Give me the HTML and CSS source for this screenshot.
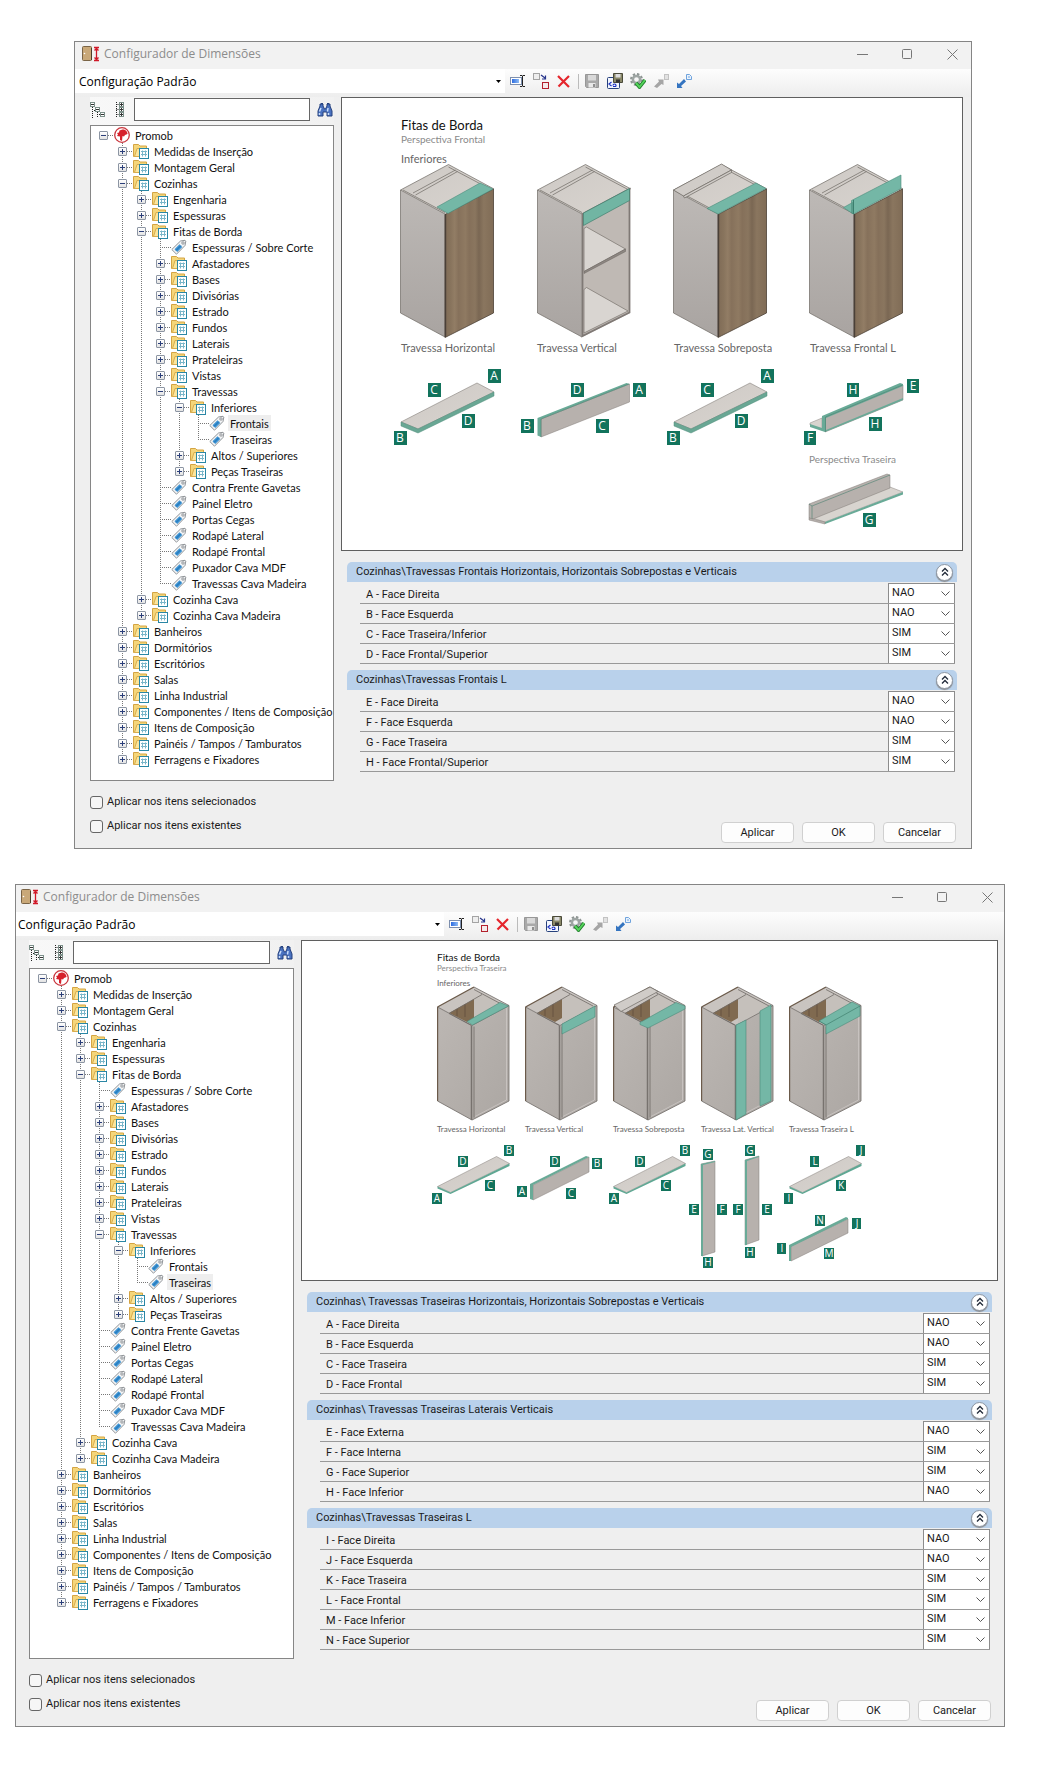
FILE: index.html
```html
<!DOCTYPE html>
<html lang="pt-BR">
<head>
<meta charset="utf-8">
<title>Configurador de Dimensões</title>
<link rel="stylesheet" href="styles.css">
</head>
<body>
<svg class="defs" aria-hidden="true">
  <defs>
    <linearGradient id="gSide" x1="0" y1="0" x2="0" y2="1"><stop offset="0" stop-color="#bdb9b6"/><stop offset="1" stop-color="#a9a4a1"/></linearGradient>
    <linearGradient id="gTop" x1="0" y1="0" x2="1" y2="1"><stop offset="0" stop-color="#cdc9c5"/><stop offset="1" stop-color="#d9d4cf"/></linearGradient>
    <linearGradient id="gRear" x1="0" y1="0" x2="1" y2="1"><stop offset="0" stop-color="#bcb7b3"/><stop offset="1" stop-color="#aca7a3"/></linearGradient>
    <linearGradient id="gWood" x1="0" x2="1"><stop offset="0" stop-color="#7f6b56"/><stop offset=".12" stop-color="#88745d"/><stop offset=".2" stop-color="#927d65"/><stop offset=".28" stop-color="#86715b"/><stop offset=".42" stop-color="#8f7a62"/><stop offset=".5" stop-color="#85705a"/><stop offset=".62" stop-color="#8a765f"/><stop offset=".7" stop-color="#7a6753"/><stop offset=".8" stop-color="#8a765f"/><stop offset="1" stop-color="#806c56"/></linearGradient>
    <linearGradient id="gBlue" x1="0" x2="1"><stop offset="0" stop-color="#2c6be0"/><stop offset="1" stop-color="#8ebcf5"/></linearGradient>
  </defs>

  <symbol id="folder" viewBox="0 0 16 16"><path d="M.5 13.500V1.500h5l1.500 1.500h6.500v9.500z" fill="#f5d67a" stroke="#d4a443"/><path d="M1.500 13.500 4 5.500h10v8z" fill="#fbe59c" stroke="#d9ad4e"/><rect x="6.500" y="5.500" width="9" height="10" fill="#fff" stroke="#2a87a5"/><path d="M8 8.500h6M8 11.500h6M9.500 7.500v6M12.500 7.500v6" stroke="#7ab6c9" fill="none"/></symbol>
  <symbol id="tag" viewBox="0 0 16 16"><path d="M.8 10.500 9.500 2l4.500-.7.800.8-.8 4.400-8.500 8.700z" fill="#f3f4f5" stroke="#8f9397"/><path d="m3.500 10.300 5-5 2.800 2.800-5 5z" fill="#3b93d4"/><path d="m5 11.500 4.800-4.800" stroke="#1f6cab"/><circle cx="12" cy="4" r="1.200" fill="#fff" stroke="#8f9397"/></symbol>
  <symbol id="promob" viewBox="0 0 16 16"><circle cx="8" cy="8" r="7.300" fill="#fff" stroke="#c9343c" stroke-width="1.300"/><path d="M8.500 2.500c3 0 5 2 5 4.500l-2.500 1-1 1.500-1.500-.5-.5 5-2-1V9.500L3 9l1-1.500L3 6l2-.5.500-2z" fill="#d6202b"/></symbol>
  <symbol id="app" viewBox="0 0 18 16"><rect x=".5" y=".5" width="9" height="14" rx="1" fill="#c9a878" stroke="#7a6446"/><path d="M9.500 2v12" stroke="#4e3f2c"/><circle cx="2.500" cy="7.500" r=".8" fill="#fff"/><path d="M12 1.500h5M12 14.500h5M14.500 2v12M12.500 4.500l2-2 2 2M12.500 11.500l2 2 2-2" fill="none" stroke="#d01828" stroke-width="1.300"/></symbol>
  <symbol id="min" viewBox="0 0 11 11"><path d="M0 5.500h11" stroke="#777"/></symbol>
  <symbol id="max" viewBox="0 0 11 11"><rect x=".5" y=".5" width="9" height="9" rx="1" fill="none" stroke="#777"/></symbol>
  <symbol id="close" viewBox="0 0 11 11"><path d="m.5.5 10 10m0-10-10 10" stroke="#777" fill="none"/></symbol>
  <symbol id="rename" viewBox="0 0 16 16"><rect x=".5" y="4.500" width="11" height="7" fill="#fff" stroke="#7d8fae"/><path d="M2 6h7v4H2z" fill="url(#gBlue)"/><path d="M10 2.500h2l.5.500.5-.5h2M10 13.500h2l.5-.5.500.5h2M12.500 3v10" stroke="#222" fill="none"/></symbol>
  <symbol id="dup" viewBox="0 0 16 16"><rect x=".5" y=".5" width="6" height="6" fill="#eee" stroke="#555" stroke-dasharray="1 1"/><path d="m8 2 4 3M12.500 2.500V6H9" stroke="#26348c" fill="none" stroke-width="1.200"/><rect x="9.500" y="9.500" width="6" height="6" fill="#f4eaea" stroke="#b3202c"/></symbol>
  <symbol id="del" viewBox="0 0 16 16"><path d="m2 3 11 11M13 3 2.500 13.500" stroke="#e5252c" stroke-width="2.200" fill="none"/></symbol>
  <symbol id="save" viewBox="0 0 16 16"><path d="M1.500 1.500h13v13h-12l-1-1z" fill="#a9a9a9" stroke="#979797"/><path d="M4 2h8v5.500H4z" fill="#d9d9d9"/><path d="M4.500 10h7v4.500h-7z" fill="#e9e9e9"/><path d="M9 11h2v3H9z" fill="#8f8f8f"/></symbol>
  <symbol id="saveas" viewBox="0 0 16 16"><rect x=".5" y="4.500" width="12" height="11" rx="1" fill="#f3f6fd" stroke="#26417c"/><path d="M6.500.5h9v9h-9z" fill="#8a8868" stroke="#4a4a3a"/><path d="M8.500 1h5v3.500h-5z" fill="#ddd"/><path d="M9 6.500h4v3H9z" fill="#333"/><path d="m4.500 9-2.500 2 2.500 2M6 12.500c0-2 3-2 3 0v1M6 13.500h3" stroke="#1a2fc0" stroke-width="1.200" fill="none"/></symbol>
  <symbol id="gear" viewBox="0 0 16 16"><circle cx="6.500" cy="6.500" r="5" fill="none" stroke="#8f9694" stroke-width="3" stroke-dasharray="2.200 1.700"/><circle cx="6.500" cy="6.500" r="3.600" fill="none" stroke="#9ea5a3" stroke-width="2.500"/><path d="m6 10 3.500 4 5.500-7" fill="none" stroke="#1e7a2a" stroke-width="3.600"/><path d="m6 10 3.500 4 5.500-7" fill="none" stroke="#54d35a" stroke-width="2"/></symbol>
  <symbol id="impG" viewBox="0 0 16 16"><path d="m1 13.500 5-5-1-2h5.500V12l-2-1-4.500 4z" fill="#a5a5a5"/><rect x="11.500" y="1.500" width="4" height="5" fill="#e2e2e2" stroke="#c2c2c2"/></symbol>
  <symbol id="expB" viewBox="0 0 16 16"><path d="M1 9.500V15h5.500l-1.500-2L10 8.500 8 6 3 11z" fill="#3474c0"/><path d="M10.500 1.500h3l2 2v3h-5z" fill="#eaf3fd" stroke="#6fa3dd"/><path d="M12 4h2" stroke="#6fa3dd"/></symbol>
  <symbol id="collapse" viewBox="0 0 16 16"><path d="M2.500 5v11M7.500 10v6M4 8.500h2M9 12.500h2" stroke="#222" stroke-dasharray="1 1" fill="none"/><g fill="#fff" stroke="#7c908a"><rect x=".5" y=".5" width="4" height="4"/><rect x="5.500" y="5.500" width="4" height="4"/><rect x="10.500" y="10.500" width="4" height="4"/></g><path d="M1 2.500h3M6 7.500h3M11 12.500h3" stroke="#333"/></symbol>
  <symbol id="expand" viewBox="0 0 16 16"><path d="M4.500 0v16M4.500 2.500h4M4.500 7.500h4M4.500 12.500h4" stroke="#222" stroke-dasharray="1 1" fill="none"/><g fill="#fff" stroke="#7c908a"><rect x="7.500" y=".5" width="4" height="4"/><rect x="7.500" y="5.500" width="4" height="4"/><rect x="7.500" y="10.500" width="4" height="4"/></g><path d="M8 2.500h3M8 7.500h3M8 12.500h3M9.500 1v3M9.500 6v3M9.500 11v3" stroke="#333"/></symbol>
  <symbol id="find" viewBox="0 0 16 16"><path d="M1 14V9l2-5V2h3v2l1.500 3h1L10 4V2h3v2l2 5v5h-5v-4H6v4z" fill="#4a72c0" stroke="#25407c"/><path d="M2.500 9.500 4 6M11 6l-.5 3.500M2.500 11v2M11.500 11v2" stroke="#c9defb" stroke-width="1.500"/><path d="M4 1.500h2M10 1.500h2" stroke="#25407c"/></symbol>
  <symbol id="up2" viewBox="0 0 10 10"><path d="m2 4.500 3-3 3 3m-6 4 3-3 3 3" fill="none" stroke="#222b3a" stroke-width="1.300"/></symbol>

  <symbol id="caseFront" viewBox="0 0 96 176">
    <path d="M48.500 1.500 94 26 45 51 .5 27z" fill="url(#gTop)"/>
    <path d="M.5 27 45 51v123L.5 150z" fill="url(#gSide)"/>
    <path d="M.5 27 48.500 1.500 94 26M3 27 45 49.500M48.500 4 91 26.500M57.500 8.500 15.500 32M55.500 7 13 30M.5 27 45 51M.5 27v123l44.500 24" fill="none" stroke="#6d6863" stroke-width=".7"/>
  </symbol>
  <symbol id="door" viewBox="0 0 96 176"><path d="M45 51.500 93.500 26v124L45 174.500z" fill="url(#gWood)" stroke="#4b4035" stroke-width=".8"/><path d="M45.500 51v123" stroke="#4a4038" stroke-width="1.400"/></symbol>
  <symbol id="openFront" viewBox="0 0 96 176">
    <path d="M45 51 93 26v124L45 174z" fill="#bfb9b4"/>
    <path d="M47 65.500 49.500 64 88.500 86 47 108.500zM47 126.500l2.500-2L91 148l-44 22z" fill="#d9d5d1" stroke="#77716c" stroke-width=".7"/>
    <path d="m47 108.500 41.500-22.500v2.500L47 110.500z" fill="#8e8883" stroke="#68635f" stroke-width=".5"/>
    <path d="M45.500 51v122l47-23.500V26z" fill="none" stroke="#7f7975" stroke-width="1.800"/>
    <path d="m46.500 50 46-24.500v12L46.500 62.500z" fill="#71b5a3" stroke="#41806f" stroke-width=".7"/>
  </symbol>
  <symbol id="caseRear" viewBox="0 0 74 136">
    <path d="M37 1 72 19.500 35 39.500.5 21z" fill="#c9c4c0"/>
    <path d="M12 27 37 13v19l-7 4z" fill="#806a50"/><path d="M20 23v7M28 18v13" stroke="#665340"/>
    <path d="m37 13 8-5 25 12.500L37 37z" fill="#c5c0bb"/>
    <path d="M.5 21 35 39.500V134L.5 115zM35 39.500l37-20V115l-37 19z" fill="url(#gRear)"/>
    <path d="M.5 21v94M.5 21 37 1" stroke="#6b5a4a" stroke-width="1.400" fill="none"/>
    <path d="M37 1 72 19.500 35 39.500.5 21M37 3.500l31 16.500M45 8.500 12 27.500l22.500 12M72 19.500V115l-37 19L.5 115M37 40.500v91" fill="none" stroke="#6f6a66" stroke-width=".8"/>
    <path d="M34.500 40v94" stroke="#77726e" stroke-width="1.500"/><path d="M38 130.500 69.500 114V22" fill="none" stroke="#cdc8c5" stroke-width=".8"/>
  </symbol>
  <symbol id="boardL" viewBox="0 0 96 54"><path d="M1 40 77 1l17 9-76 37z" fill="url(#gTop)" stroke="#857f7a" stroke-width=".6"/><path d="m1 40 17 7 76-37v4L18 51 1 44z" fill="#69a794" stroke="#4f8c7b" stroke-width=".5"/></symbol>
  <symbol id="boardS" viewBox="0 0 74 38"><path d="M.5 30.500 59.500.5l13 7-59 29z" fill="url(#gTop)" stroke="#857f7a" stroke-width=".5"/><path d="m.5 30.500 13 6 59-29V10l-59 28-13-5.500z" fill="#5fa793"/></symbol>
</svg>

<main class="page">
<section class="window window-front">
  <header class="titlebar">
    <svg class="app-icon"><use href="#app"/></svg><h1>Configurador de Dimensões</h1>
    <div class="win-controls"><button type="button" aria-label="Minimizar"><svg><use href="#min"/></svg></button><button type="button" aria-label="Maximizar"><svg><use href="#max"/></svg></button><button type="button" aria-label="Fechar"><svg><use href="#close"/></svg></button></div>
  </header>
  <div class="toolbar">
    <select class="preset" aria-label="Configuração"><option>Configuração Padrão</option></select>
    <button type="button" aria-label="Renomear"><svg><use href="#rename"/></svg></button><button type="button" aria-label="Duplicar"><svg><use href="#dup"/></svg></button><button type="button" aria-label="Excluir"><svg><use href="#del"/></svg></button><span class="sep"></span><button type="button" aria-label="Salvar"><svg><use href="#save"/></svg></button><button type="button" aria-label="Salvar como"><svg><use href="#saveas"/></svg></button><button type="button" aria-label="Validar"><svg><use href="#gear"/></svg></button><button type="button" aria-label="Importar"><svg><use href="#impG"/></svg></button><button type="button" aria-label="Exportar"><svg><use href="#expB"/></svg></button>
  </div>
  <div class="content">
    <aside class="sidebar">
      <div class="side-tools"><button type="button" aria-label="Recolher tudo"><svg><use href="#collapse"/></svg></button><button type="button" aria-label="Expandir tudo"><svg><use href="#expand"/></svg></button><input type="text" aria-label="Pesquisar"><button type="button" aria-label="Localizar"><svg><use href="#find"/></svg></button></div>
      <ul class="tree">
        <li><details open><summary><svg><use href="#promob"/></svg><span>Promob</span></summary><ul>
          <li><details><summary><svg><use href="#folder"/></svg><span>Medidas de Inserção</span></summary></details></li>
          <li><details><summary><svg><use href="#folder"/></svg><span>Montagem Geral</span></summary></details></li>
          <li><details open><summary><svg><use href="#folder"/></svg><span>Cozinhas</span></summary><ul>
            <li><details><summary><svg><use href="#folder"/></svg><span>Engenharia</span></summary></details></li>
            <li><details><summary><svg><use href="#folder"/></svg><span>Espessuras</span></summary></details></li>
            <li><details open><summary><svg><use href="#folder"/></svg><span>Fitas de Borda</span></summary><ul>
              <li class="leaf"><svg><use href="#tag"/></svg><span>Espessuras / Sobre Corte</span></li>
              <li><details><summary><svg><use href="#folder"/></svg><span>Afastadores</span></summary></details></li>
              <li><details><summary><svg><use href="#folder"/></svg><span>Bases</span></summary></details></li>
              <li><details><summary><svg><use href="#folder"/></svg><span>Divisórias</span></summary></details></li>
              <li><details><summary><svg><use href="#folder"/></svg><span>Estrado</span></summary></details></li>
              <li><details><summary><svg><use href="#folder"/></svg><span>Fundos</span></summary></details></li>
              <li><details><summary><svg><use href="#folder"/></svg><span>Laterais</span></summary></details></li>
              <li><details><summary><svg><use href="#folder"/></svg><span>Prateleiras</span></summary></details></li>
              <li><details><summary><svg><use href="#folder"/></svg><span>Vistas</span></summary></details></li>
              <li><details open><summary><svg><use href="#folder"/></svg><span>Travessas</span></summary><ul>
                <li><details open><summary><svg><use href="#folder"/></svg><span>Inferiores</span></summary><ul>
                  <li class="leaf"><svg><use href="#tag"/></svg><span class="current">Frontais</span></li>
                  <li class="leaf"><svg><use href="#tag"/></svg><span>Traseiras</span></li>
                </ul></details></li>
                <li><details><summary><svg><use href="#folder"/></svg><span>Altos / Superiores</span></summary></details></li>
                <li><details><summary><svg><use href="#folder"/></svg><span>Peças Traseiras</span></summary></details></li>
              </ul></details></li>
              <li class="leaf"><svg><use href="#tag"/></svg><span>Contra Frente Gavetas</span></li>
              <li class="leaf"><svg><use href="#tag"/></svg><span>Painel Eletro</span></li>
              <li class="leaf"><svg><use href="#tag"/></svg><span>Portas Cegas</span></li>
              <li class="leaf"><svg><use href="#tag"/></svg><span>Rodapé Lateral</span></li>
              <li class="leaf"><svg><use href="#tag"/></svg><span>Rodapé Frontal</span></li>
              <li class="leaf"><svg><use href="#tag"/></svg><span>Puxador Cava MDF</span></li>
              <li class="leaf"><svg><use href="#tag"/></svg><span>Travessas Cava Madeira</span></li>
            </ul></details></li>
            <li><details><summary><svg><use href="#folder"/></svg><span>Cozinha Cava</span></summary></details></li>
            <li><details><summary><svg><use href="#folder"/></svg><span>Cozinha Cava Madeira</span></summary></details></li>
          </ul></details></li>
          <li><details><summary><svg><use href="#folder"/></svg><span>Banheiros</span></summary></details></li>
          <li><details><summary><svg><use href="#folder"/></svg><span>Dormitórios</span></summary></details></li>
          <li><details><summary><svg><use href="#folder"/></svg><span>Escritórios</span></summary></details></li>
          <li><details><summary><svg><use href="#folder"/></svg><span>Salas</span></summary></details></li>
          <li><details><summary><svg><use href="#folder"/></svg><span>Linha Industrial</span></summary></details></li>
          <li><details><summary><svg><use href="#folder"/></svg><span>Componentes / Itens de Composição</span></summary></details></li>
          <li><details><summary><svg><use href="#folder"/></svg><span>Itens de Composição</span></summary></details></li>
          <li><details><summary><svg><use href="#folder"/></svg><span>Painéis / Tampos / Tamburatos</span></summary></details></li>
          <li><details><summary><svg><use href="#folder"/></svg><span>Ferragens e Fixadores</span></summary></details></li>
        </ul></details></li>
      </ul>
    </aside>
    <div class="detail">
      <svg class="picture picture-l" viewBox="342 98 620 452">
        <text class="t-title" x="401" y="130">Fitas de Borda</text>
        <text class="t-sub" x="401" y="143">Perspectiva Frontal</text>
        <text class="t-label" x="401" y="163">Inferiores</text>
        <use href="#caseFront" x="400" y="163" width="96" height="176"/><use href="#door" x="400" y="163" width="96" height="176"/>
        <path class="teal" d="m480 183 13 6-45 24.500-11-6.500z"/>
        <use href="#caseFront" x="537" y="163" width="96" height="176"/><use href="#openFront" x="537" y="163" width="96" height="176"/>
        <use href="#caseFront" x="673" y="163" width="96" height="176"/><use href="#door" x="673" y="163" width="96" height="176"/>
        <path class="cap" d="m673.500 190 48-26 10 6-48 26z"/><path class="cap" d="m683.500 196 48-26v2.500l-47 25.500z"/>
        <path class="teal" d="m707 208.500 49-25.500 10 5.500-48 25.500z"/>
        <use href="#caseFront" x="809" y="163" width="96" height="176"/><use href="#door" x="809" y="163" width="96" height="176"/>
        <path class="teal" d="m843.500 207.500 9-5v11zM851.500 200.500 901 175v13.500l-47.500 25.500-2-1z"/>
        <path d="M853.500 200v14" stroke="#3b7e6d"/>
        <text class="t-label" x="401" y="352">Travessa Horizontal</text><text class="t-label" x="537" y="352">Travessa Vertical</text><text class="t-label" x="674" y="352">Travessa Sobreposta</text><text class="t-label" x="810" y="352">Travessa Frontal L</text>
        <use href="#boardL" x="400" y="382" width="96" height="54"/><use href="#boardL" x="673" y="382" width="96" height="54"/>
        <path class="face" d="m541 419 88.500-35v18L541 437z"/><path class="edge" d="m537.500 418 89-35 3 1-88.500 35v18l-3.500-1.500z"/><path class="crease" d="M541 437v-18l88-35"/>
        <path class="light" d="m810 423 12-5v12l-12-5z"/><path class="edge" d="m810 424 12 4v3l-12-4z"/><path class="face" d="m825 417 78-32v15l-78 32z"/><path class="edge" d="m822 416 78-33 3 1v2l-77 32v12l77-32v2l-78 32-3-1z"/><path class="crease" d="M825.500 432v-15l77-32"/>
        <text class="t-sub" x="809" y="463">Perspectiva Traseira</text>
        <path class="light" d="m812 518 78-31 13 5-78 30z"/><path class="face" d="m809 504 78-30 3 1v13l-77 31-4-1z"/><path class="crease" d="M812 519v-13l78-31M809 504l3 2"/><path class="edge" d="m825 522 78-30v2.500L825 524z"/><path class="face" d="m809 518 16 4v2l-16-4z"/>
        <g class="badges"><path d="M488 369h13v14h-13zM428 383h13v14h-13zM394 431h13v14h-13zM462 414h13v14h-13zM571 383h13v14h-13zM633 383h13v14h-13zM521 419h13v14h-13zM596 419h13v14h-13zM761 369h13v14h-13zM701 383h13v14h-13zM667 431h13v14h-13zM735 414h13v14h-13zM847 383h12v14h-12zM907 379h12v14h-12zM804 431h12v14h-12zM869 417h13v14h-13zM863 513h13v14h-13z"/>
        <text x="494" y="380">A</text><text x="434" y="394">C</text><text x="400" y="442">B</text><text x="468" y="425">D</text><text x="577" y="394">D</text><text x="639" y="394">A</text><text x="527" y="430">B</text><text x="602" y="430">C</text><text x="767" y="380">A</text><text x="707" y="394">C</text><text x="673" y="442">B</text><text x="741" y="425">D</text><text x="853" y="394">H</text><text x="913" y="390">E</text><text x="810" y="442">F</text><text x="875" y="428">H</text><text x="869" y="524">G</text></g>
      </svg>
      <section class="group"><h2>Cozinhas\Travessas Frontais Horizontais, Horizontais Sobrepostas e Verticais<button type="button" aria-label="Recolher grupo"><svg><use href="#up2"/></svg></button></h2>
        <label>A - Face Direita<select><option>NAO</option><option>SIM</option></select></label>
        <label>B - Face Esquerda<select><option>NAO</option><option>SIM</option></select></label>
        <label>C - Face Traseira/Inferior<select><option>SIM</option><option>NAO</option></select></label>
        <label>D - Face Frontal/Superior<select><option>SIM</option><option>NAO</option></select></label>
      </section>
      <section class="group"><h2>Cozinhas\Travessas Frontais L<button type="button" aria-label="Recolher grupo"><svg><use href="#up2"/></svg></button></h2>
        <label>E - Face Direita<select><option>NAO</option><option>SIM</option></select></label>
        <label>F - Face Esquerda<select><option>NAO</option><option>SIM</option></select></label>
        <label>G - Face Traseira<select><option>SIM</option><option>NAO</option></select></label>
        <label>H - Face Frontal/Superior<select><option>SIM</option><option>NAO</option></select></label>
      </section>
    </div>
  </div>
  <footer class="footer">
    <div class="checks"><label><input type="checkbox">Aplicar nos itens selecionados</label><label><input type="checkbox">Aplicar nos itens existentes</label></div>
    <div class="actions"><button type="button">Aplicar</button><button type="button">OK</button><button type="button">Cancelar</button></div>
  </footer>
</section>

<section class="window window-rear">
  <header class="titlebar">
    <svg class="app-icon"><use href="#app"/></svg><h1>Configurador de Dimensões</h1>
    <div class="win-controls"><button type="button" aria-label="Minimizar"><svg><use href="#min"/></svg></button><button type="button" aria-label="Maximizar"><svg><use href="#max"/></svg></button><button type="button" aria-label="Fechar"><svg><use href="#close"/></svg></button></div>
  </header>
  <div class="toolbar">
    <select class="preset" aria-label="Configuração"><option>Configuração Padrão</option></select>
    <button type="button" aria-label="Renomear"><svg><use href="#rename"/></svg></button><button type="button" aria-label="Duplicar"><svg><use href="#dup"/></svg></button><button type="button" aria-label="Excluir"><svg><use href="#del"/></svg></button><span class="sep"></span><button type="button" aria-label="Salvar"><svg><use href="#save"/></svg></button><button type="button" aria-label="Salvar como"><svg><use href="#saveas"/></svg></button><button type="button" aria-label="Validar"><svg><use href="#gear"/></svg></button><button type="button" aria-label="Importar"><svg><use href="#impG"/></svg></button><button type="button" aria-label="Exportar"><svg><use href="#expB"/></svg></button>
  </div>
  <div class="content">
    <aside class="sidebar">
      <div class="side-tools"><button type="button" aria-label="Recolher tudo"><svg><use href="#collapse"/></svg></button><button type="button" aria-label="Expandir tudo"><svg><use href="#expand"/></svg></button><input type="text" aria-label="Pesquisar"><button type="button" aria-label="Localizar"><svg><use href="#find"/></svg></button></div>
      <ul class="tree">
        <li><details open><summary><svg><use href="#promob"/></svg><span>Promob</span></summary><ul>
          <li><details><summary><svg><use href="#folder"/></svg><span>Medidas de Inserção</span></summary></details></li>
          <li><details><summary><svg><use href="#folder"/></svg><span>Montagem Geral</span></summary></details></li>
          <li><details open><summary><svg><use href="#folder"/></svg><span>Cozinhas</span></summary><ul>
            <li><details><summary><svg><use href="#folder"/></svg><span>Engenharia</span></summary></details></li>
            <li><details><summary><svg><use href="#folder"/></svg><span>Espessuras</span></summary></details></li>
            <li><details open><summary><svg><use href="#folder"/></svg><span>Fitas de Borda</span></summary><ul>
              <li class="leaf"><svg><use href="#tag"/></svg><span>Espessuras / Sobre Corte</span></li>
              <li><details><summary><svg><use href="#folder"/></svg><span>Afastadores</span></summary></details></li>
              <li><details><summary><svg><use href="#folder"/></svg><span>Bases</span></summary></details></li>
              <li><details><summary><svg><use href="#folder"/></svg><span>Divisórias</span></summary></details></li>
              <li><details><summary><svg><use href="#folder"/></svg><span>Estrado</span></summary></details></li>
              <li><details><summary><svg><use href="#folder"/></svg><span>Fundos</span></summary></details></li>
              <li><details><summary><svg><use href="#folder"/></svg><span>Laterais</span></summary></details></li>
              <li><details><summary><svg><use href="#folder"/></svg><span>Prateleiras</span></summary></details></li>
              <li><details><summary><svg><use href="#folder"/></svg><span>Vistas</span></summary></details></li>
              <li><details open><summary><svg><use href="#folder"/></svg><span>Travessas</span></summary><ul>
                <li><details open><summary><svg><use href="#folder"/></svg><span>Inferiores</span></summary><ul>
                  <li class="leaf"><svg><use href="#tag"/></svg><span>Frontais</span></li>
                  <li class="leaf"><svg><use href="#tag"/></svg><span class="current">Traseiras</span></li>
                </ul></details></li>
                <li><details><summary><svg><use href="#folder"/></svg><span>Altos / Superiores</span></summary></details></li>
                <li><details><summary><svg><use href="#folder"/></svg><span>Peças Traseiras</span></summary></details></li>
              </ul></details></li>
              <li class="leaf"><svg><use href="#tag"/></svg><span>Contra Frente Gavetas</span></li>
              <li class="leaf"><svg><use href="#tag"/></svg><span>Painel Eletro</span></li>
              <li class="leaf"><svg><use href="#tag"/></svg><span>Portas Cegas</span></li>
              <li class="leaf"><svg><use href="#tag"/></svg><span>Rodapé Lateral</span></li>
              <li class="leaf"><svg><use href="#tag"/></svg><span>Rodapé Frontal</span></li>
              <li class="leaf"><svg><use href="#tag"/></svg><span>Puxador Cava MDF</span></li>
              <li class="leaf"><svg><use href="#tag"/></svg><span>Travessas Cava Madeira</span></li>
            </ul></details></li>
            <li><details><summary><svg><use href="#folder"/></svg><span>Cozinha Cava</span></summary></details></li>
            <li><details><summary><svg><use href="#folder"/></svg><span>Cozinha Cava Madeira</span></summary></details></li>
          </ul></details></li>
          <li><details><summary><svg><use href="#folder"/></svg><span>Banheiros</span></summary></details></li>
          <li><details><summary><svg><use href="#folder"/></svg><span>Dormitórios</span></summary></details></li>
          <li><details><summary><svg><use href="#folder"/></svg><span>Escritórios</span></summary></details></li>
          <li><details><summary><svg><use href="#folder"/></svg><span>Salas</span></summary></details></li>
          <li><details><summary><svg><use href="#folder"/></svg><span>Linha Industrial</span></summary></details></li>
          <li><details><summary><svg><use href="#folder"/></svg><span>Componentes / Itens de Composição</span></summary></details></li>
          <li><details><summary><svg><use href="#folder"/></svg><span>Itens de Composição</span></summary></details></li>
          <li><details><summary><svg><use href="#folder"/></svg><span>Painéis / Tampos / Tamburatos</span></summary></details></li>
          <li><details><summary><svg><use href="#folder"/></svg><span>Ferragens e Fixadores</span></summary></details></li>
        </ul></details></li>
      </ul>
    </aside>
    <div class="detail">
      <svg class="picture picture-s" viewBox="302 940 695 339">
        <text class="t-title" x="437" y="960">Fitas de Borda</text>
        <text class="t-sub" x="437" y="970">Perspectiva Traseira</text>
        <text class="t-label" x="437" y="985">Inferiores</text>
        <use href="#caseRear" x="437" y="985" width="74" height="136"/><path class="teal" d="m500 1001.500 8.500 3.500-36 19-5.500-3.500z"/>
        <use href="#caseRear" x="525" y="985" width="74" height="136"/><path class="teal" d="m562 1023 33-18v11l-33 17z"/>
        <use href="#caseRear" x="613" y="985" width="74" height="136"/><path class="cap" d="m614 1004 36-18 8 4.500-37 20z"/><path class="teal" d="m640 1021.500 36-20 9 3.500v3l-37 19-8-3.500z"/>
        <use href="#caseRear" x="701" y="985" width="74" height="136"/><path class="teal" d="m736 1024 10-5v94l-10 6zM760 1010l11-6v96l-11 5z"/>
        <use href="#caseRear" x="789" y="985" width="74" height="136"/><path class="teal" d="m819 1020 33-19 8 4v10l-34 18v-9z"/><path d="m819 1020 7 4 34-19" fill="none" stroke="#41806f" stroke-width=".7"/>
        <text class="t-label" x="437" y="1131">Travessa Horizontal</text><text class="t-label" x="525" y="1131">Travessa Vertical</text><text class="t-label" x="613" y="1131">Travessa Sobreposta</text><text class="t-label" x="701" y="1131">Travessa Lat. Vertical</text><text class="t-label" x="789" y="1131">Travessa Traseira L</text>
        <use href="#boardS" x="437" y="1155" width="74" height="38"/><use href="#boardS" x="613" y="1155" width="74" height="38"/><use href="#boardS" x="789" y="1155" width="74" height="38"/>
        <path class="face" d="m533 1184 56-28v15l-56 28z"/><path class="edge" d="m530 1183 56-28 3 1-56 28v15l-3-1z"/>
        <path class="face" d="m701 1163 14-3v91l-13 4z"/><path class="edge" d="m701 1163 14-3v1l-12 3v91h-2z"/>
        <path class="face" d="m745 1159 14-4v84l-14 5z"/><path class="edge" d="m745 1159 14-4v1l-12 4v84h-2z"/>
        <path class="face" d="m791 1245 57-27v14l-57 28z"/><path class="edge" d="m789 1244 57-28 2 1v1l-57 28v14h-2z"/>
        <g class="badges"><path d="M504 1144h10v11h-10zM458 1155h10v11h-10zM485 1179h10v11h-10zM432 1192h10v11h-10zM550 1155h10v11h-10zM592 1157h10v11h-10zM517 1185h10v11h-10zM566 1187h10v11h-10zM680 1144h10v11h-10zM635 1155h10v11h-10zM661 1179h10v11h-10zM609 1192h10v11h-10zM703 1148h10v11h-10zM689 1203h10v11h-10zM717 1203h10v11h-10zM703 1256h10v11h-10zM745 1144h10v11h-10zM733 1203h10v11h-10zM762 1203h10v11h-10zM745 1246h10v11h-10zM856 1144h9v11h-9zM810 1155h9v11h-9zM836 1179h10v11h-10zM784 1192h9v11h-9zM815 1214h10v11h-10zM852 1217h9v11h-9zM777 1242h9v11h-9zM824 1247h10v11h-10z"/>
        <text x="509" y="1153">B</text><text x="463" y="1164">D</text><text x="490" y="1188">C</text><text x="437" y="1201">A</text><text x="555" y="1164">D</text><text x="597" y="1166">B</text><text x="522" y="1194">A</text><text x="571" y="1196">C</text><text x="685" y="1153">B</text><text x="640" y="1164">D</text><text x="666" y="1188">C</text><text x="614" y="1201">A</text><text x="708" y="1157">G</text><text x="694" y="1212">E</text><text x="722" y="1212">F</text><text x="708" y="1265">H</text><text x="750" y="1153">G</text><text x="738" y="1212">F</text><text x="767" y="1212">E</text><text x="750" y="1255">H</text><text x="861" y="1153">J</text><text x="815" y="1164">L</text><text x="841" y="1188">K</text><text x="789" y="1201">I</text><text x="820" y="1223">N</text><text x="857" y="1226">J</text><text x="782" y="1251">I</text><text x="829" y="1256">M</text></g>
      </svg>
      <section class="group"><h2>Cozinhas\ Travessas Traseiras Horizontais, Horizontais Sobrepostas e Verticais<button type="button" aria-label="Recolher grupo"><svg><use href="#up2"/></svg></button></h2>
        <label>A - Face Direita<select><option>NAO</option><option>SIM</option></select></label>
        <label>B - Face Esquerda<select><option>NAO</option><option>SIM</option></select></label>
        <label>C - Face Traseira<select><option>SIM</option><option>NAO</option></select></label>
        <label>D - Face Frontal<select><option>SIM</option><option>NAO</option></select></label>
      </section>
      <section class="group"><h2>Cozinhas\ Travessas Traseiras Laterais Verticais<button type="button" aria-label="Recolher grupo"><svg><use href="#up2"/></svg></button></h2>
        <label>E - Face Externa<select><option>NAO</option><option>SIM</option></select></label>
        <label>F - Face Interna<select><option>SIM</option><option>NAO</option></select></label>
        <label>G - Face Superior<select><option>SIM</option><option>NAO</option></select></label>
        <label>H - Face Inferior<select><option>NAO</option><option>SIM</option></select></label>
      </section>
      <section class="group"><h2>Cozinhas\Travessas Traseiras L<button type="button" aria-label="Recolher grupo"><svg><use href="#up2"/></svg></button></h2>
        <label>I - Face Direita<select><option>NAO</option><option>SIM</option></select></label>
        <label>J - Face Esquerda<select><option>NAO</option><option>SIM</option></select></label>
        <label>K - Face Traseira<select><option>SIM</option><option>NAO</option></select></label>
        <label>L - Face Frontal<select><option>SIM</option><option>NAO</option></select></label>
        <label>M - Face Inferior<select><option>SIM</option><option>NAO</option></select></label>
        <label>N - Face Superior<select><option>SIM</option><option>NAO</option></select></label>
      </section>
    </div>
  </div>
  <footer class="footer">
    <div class="checks"><label><input type="checkbox">Aplicar nos itens selecionados</label><label><input type="checkbox">Aplicar nos itens existentes</label></div>
    <div class="actions"><button type="button">Aplicar</button><button type="button">OK</button><button type="button">Cancelar</button></div>
  </footer>
</section>
</main>
</body>
</html>
```
FILE: styles.css
```css
*, *::before { box-sizing: border-box; }
body { margin: 0; background: #fff; color: #1a1a1a; font: 11px/16px Roboto, "Liberation Sans", sans-serif; }
.defs { position: absolute; width: 0; height: 0; }
button, input, select { font: inherit; color: inherit; margin: 0; }
button { display: grid; place-items: center; padding: 0; border: 0; background: none; }

.page { display: flex; flex-direction: column; gap: 35px; padding: 41px 0 62px; }

.window { border: 1px solid #858585; background: #efefef; }
.window-front { --side: 244px; --combo: 430px; --left: 15px; --right: 8px; --title-left: 7px; --title-right: 13px; margin: 0 68px 0 74px; }
.window-rear { --side: 265px; --combo: 428px; --left: 13px; --right: 6px; --title-left: 5px; --title-right: 11px; margin: 0 35px 0 15px; }

.titlebar { display: flex; align-items: center; height: 27px; padding: 0 var(--title-right) 3px var(--title-left); background: #f2f2f2; }
.app-icon { width: 18px; height: 16px; margin-right: 4px; }
.titlebar h1 { flex: 1; margin: 0; font: 12px/16px "Open Sans", "Noto Sans", sans-serif; color: #8c8c8c; }
.win-controls { display: flex; gap: 34px; }
.win-controls button, .win-controls svg { width: 11px; height: 11px; }

.toolbar { display: flex; align-items: flex-start; height: 28px; background: linear-gradient(#fdfdfd, #ededed); }
.preset { appearance: none; width: var(--combo); height: 24px; padding: 1px 0 0 4px; border: 0; font: 12px/16px "Open Sans", "Noto Sans", sans-serif; color: #000;
  background: #fff url("data:image/svg+xml,%3Csvg xmlns='http://www.w3.org/2000/svg' width='5' height='3'%3E%3Cpath d='M0 0h5L2.500 3z'/%3E%3C/svg%3E") no-repeat right 4px center; }
.window-rear .preset { padding-left: 2px; }
.toolbar button { width: 23px; height: 24px; margin-left: 1px; }
.toolbar button + button { margin-left: 0; }
.toolbar svg { width: 16px; height: 16px; }
.sep { width: 1px; height: 15px; margin: 5px 0 0 3px; background: #bbb; }

.content { display: flex; gap: 7px; padding: 0 var(--right) 0 var(--left); }
.sidebar { display: flex; flex-direction: column; flex: none; width: var(--side); }
.side-tools { display: flex; height: 28px; padding: 1px 0 0; background: linear-gradient(to right, #f8f8f8, #f1f1f1); }
.side-tools button { width: 28px; height: 23px; }
.side-tools button:first-child { width: 16px; }
.side-tools button svg { width: 16px; height: 16px; }
.side-tools input { flex: 1; min-width: 0; height: 23px; padding: 0 4px; border: 1px solid #666; border-radius: 0; background: #fff; }
.side-tools button:last-child { width: 24px; padding-left: 6px; }

.tree { flex: 1; margin: 0; padding: 1px 0 0; border: 1px solid #868686; background: #fff; list-style: none; color: #111; white-space: nowrap; font-family: Lato, Roboto, sans-serif; }
.tree ul { margin: 0; padding: 0 0 0 19px; list-style: none; }
.tree ul > li { background: repeating-linear-gradient(#777 0 1px, transparent 1px 2px) 12px 0 / 1px 100% no-repeat; }
.tree ul > li:last-child { background-size: 1px 8px; }
.tree summary, .leaf { display: flex; align-items: center; height: 16px; }
.tree summary { padding-left: 8px; list-style: none; background: repeating-linear-gradient(to right, #777 0 1px, transparent 1px 2px) 17px 8px / 6px 1px no-repeat; }
.tree summary::before { content: ""; flex: none; width: 9px; height: 9px; margin-right: 6px; border: 1px solid #8c95a3; border-radius: 1px;
  background: linear-gradient(#2b3f7a, #2b3f7a) center / 5px 1px no-repeat, linear-gradient(#2b3f7a, #2b3f7a) center / 1px 5px no-repeat, linear-gradient(#fff, #e3e3e3); }
.tree details[open] > summary::before { background: linear-gradient(#2b3f7a, #2b3f7a) center / 5px 1px no-repeat, linear-gradient(#fff, #e3e3e3); }
.leaf::before { content: ""; flex: none; width: 11px; height: 1px; margin-left: 12px; background: repeating-linear-gradient(to right, #777 0 1px, transparent 1px 2px); }
.tree svg { flex: none; width: 16px; height: 16px; }
.tree span { margin-left: 3px; padding: 1px 2px 0; line-height: 15px; }
.tree .current { background: #eee; }

.detail { flex: 1; min-width: 0; padding-bottom: 9px; }
.picture { display: block; width: 100%; margin-bottom: 11px; border: 1px solid #5f5f5f; background: #fff; font-family: Lato, sans-serif; }
.t-title { fill: #111; }
.t-sub { fill: #8a8a8a; }
.t-label { fill: #666; }
.picture-l .t-title { font-size: 13px; }
.picture-l .t-sub { font-size: 10px; }
.picture-l text { font-size: 11px; }
.picture-s .t-title { font-size: 10px; }
.picture-s text { font-size: 8px; }
.badges { fill: #12735c; text-anchor: middle; font-family: "Open Sans", sans-serif; }
.badges text { fill: #fff; }
.picture-l .badges text { font-size: 12px; }
.picture-s .badges text { font-size: 10px; }
.teal { fill: #74b7a6; stroke: #4a8b7a; stroke-width: .6; }
.cap { fill: #d0ccc8; stroke: #6d6863; stroke-width: .7; }
.face { fill: #b7b1ad; stroke: #827c78; stroke-width: .5; }
.light { fill: #d8d4cf; stroke: #8a8580; stroke-width: .5; }
.edge { fill: #69aa97; }
.crease { fill: none; stroke: #4c7f70; stroke-width: .6; }

.group { margin: 0 6px; }
.group + .group { margin-top: 6px; }
.group h2 { display: flex; align-items: center; justify-content: space-between; height: 20px; margin: 0 0 2px; padding: 0 4px 0 9px; border-radius: 5px 5px 0 0; background: #b9d1eb; font: inherit; }
.group h2 button { width: 17px; height: 17px; border: 1px solid #8d97a5; border-radius: 50%; background: #fff; box-shadow: 0 1px 1px #8a8a8a; }
.group h2 svg { width: 10px; height: 10px; }
.group label { display: grid; grid-template-columns: 1fr 67px; align-items: center; height: 20px; margin: 0 2px 0 13px; padding: 2px 0 0 6px; border-bottom: 1px solid #999; }
.group h2 + label { height: 21px; margin-top: -1px; padding-top: 3px; }
.group select { appearance: none; height: 19px; margin-top: -2px; padding: 0 0 2px 3px; border: solid #8c8c8c; border-width: 0 1px; border-radius: 0;
  background: #fff url("data:image/svg+xml,%3Csvg xmlns='http://www.w3.org/2000/svg' width='9' height='5'%3E%3Cpath d='m.5.5 4 4 4-4' fill='none' stroke='%23555'/%3E%3C/svg%3E") no-repeat right 4px center; }
.group h2 + label select { box-shadow: 0 -1px #8c8c8c; }

.footer { display: flex; justify-content: space-between; align-items: flex-end; height: 67px; padding: 0 calc(var(--right) + 7px) 5px var(--left); }
.checks { display: flex; flex-direction: column; gap: 8px; align-self: flex-start; padding-top: 13px; }
.checks label { display: flex; align-items: center; gap: 4px; height: 16px; }
.checks input { appearance: none; width: 13px; height: 13px; border: 1px solid #666; border-radius: 3px; background: #f6f6f6; }
.actions { display: flex; gap: 8px; }
.actions button { width: 73px; height: 21px; border: 1px solid #d0d0d0; border-radius: 4px; background: #fdfdfd; }
```
